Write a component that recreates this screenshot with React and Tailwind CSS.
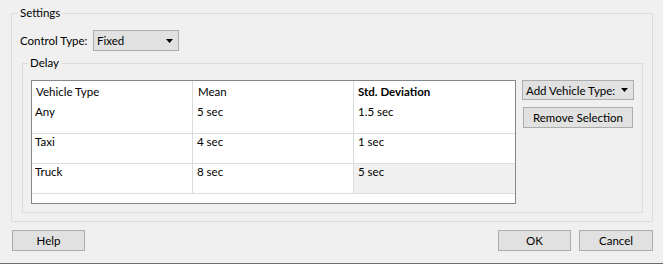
import React from 'react';

const rows = [
  { type: 'Any', mean: '5 sec', dev: '1.5 sec', h: 'h-[31px]', pt: 'pt-[1px]' },
  { type: 'Taxi', mean: '4 sec', dev: '1 sec', h: 'h-[30px]', pt: 'pt-0' },
  { type: 'Truck', mean: '8 sec', dev: '5 sec', h: 'h-[30px]', pt: 'pt-0', selected: true },
];

const Arrow = () => (
  <svg width="7" height="4" viewBox="0 0 7 4" className="shrink-0">
    <path d="M0 0h7L3.5 4z" fill="#000" />
  </svg>
);

const btn = 'bg-[#e1e1e1] border border-[#adadad] text-black flex items-center justify-center whitespace-nowrap';

export default function App() {
  return (
    <div
      className="w-[663px] h-[264px] bg-[#f0f0f0] flex flex-col text-[11.5px] leading-[15px] text-black overflow-hidden"
      style={{ fontFamily: 'Lato, "Liberation Sans", Arial, sans-serif' }}
    >
      {/* Settings group */}
      <fieldset className="ml-[11px] mt-[6px] w-[642px] h-[216px] border border-[#dcdcdc]">
        <legend className="ml-[6px] px-[2px] leading-[14px]">Settings</legend>

        <div className="flex items-center mt-[10px] pl-[8px]">
          <span className="w-[73px]">Control Type:</span>
          <div className={`${btn} !justify-between w-[86px] h-[21px] pl-[3px] pr-[5px]`}>
            <span>Fixed</span>
            <Arrow />
          </div>
        </div>

        {/* Delay group */}
        <fieldset className="ml-[10px] mt-[5px] w-[621px] h-[157px] border border-[#dcdcdc]">
          <legend className="ml-[5px] px-[2px] leading-[14px]">Delay</legend>

          <div className="flex items-start mt-[10px] pl-[8px]">
            <div className="w-[485px] h-[124px] border border-[#828790] bg-white flex flex-col">
              <div className="flex h-[22px]">
                <div className="w-[161px] border-r border-[#dcdcdc] pl-[4px] pt-[3px]">Vehicle Type</div>
                <div className="w-[161px] border-r border-[#dcdcdc] pl-[5px] pt-[3px]">Mean</div>
                <div className="flex-1 pl-[4px] pt-[3px] font-bold">Std. Deviation</div>
              </div>
              {rows.map((r) => (
                <div key={r.type} className={`flex ${r.h} border-b border-[#dcdcdc]`}>
                  <div className={`w-[161px] border-r border-[#dcdcdc] pl-[3px] ${r.pt}`}>{r.type}</div>
                  <div className={`w-[161px] border-r border-[#dcdcdc] pl-[4px] ${r.pt}`}>{r.mean}</div>
                  <div className={`flex-1 pl-[4px] ${r.pt} ${r.selected ? 'bg-[#f0f0f0]' : ''}`}>{r.dev}</div>
                </div>
              ))}
              <div className="flex-1" />
            </div>

            <div className="ml-[6px] flex flex-col">
              <div className={`${btn} !justify-between w-[112px] h-[20px] pl-[3px] pr-[5px]`}>
                <span>Add Vehicle Type:</span>
                <Arrow />
              </div>
              <div className={`${btn} mt-[7px] ml-[1px] w-[110px] h-[21px]`}>Remove Selection</div>
            </div>
          </div>
        </fieldset>
      </fieldset>

      {/* Dialog buttons */}
      <div className="flex items-start mt-[8px] pl-[12px] pr-[10px]">
        <div className={`${btn} w-[73px] h-[21px]`}>Help</div>
        <div className="flex-1" />
        <div className={`${btn} w-[73px] h-[21px]`}>OK</div>
        <div className={`${btn} ml-[8px] w-[74px] h-[21px]`}>Cancel</div>
      </div>

      <div className="flex-1" />
      <div className="h-[1px] bg-[#6b6b6b]" />
    </div>
  );
}
